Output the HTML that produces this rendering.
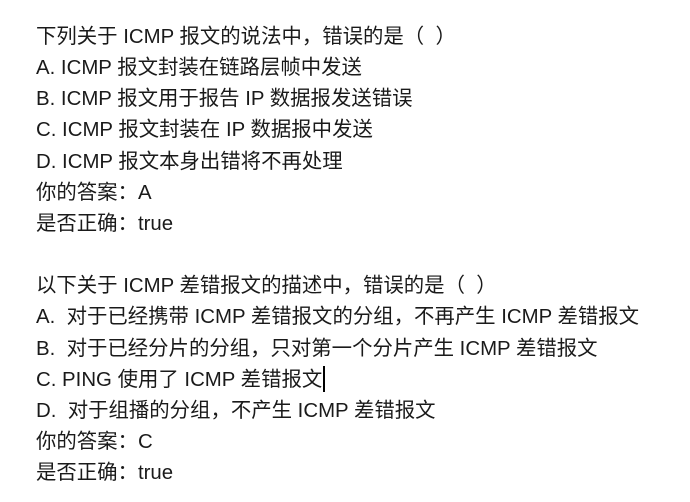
<!DOCTYPE html>
<html><head><meta charset="utf-8"><style>
html,body{margin:0;padding:0;background:#fff;width:690px;height:502px;overflow:hidden}
.c{position:absolute;left:36px;top:22px;font-family:"Liberation Sans","Noto Sans CJK SC",sans-serif;font-size:20.4px;line-height:31.15px;color:#1a1a1a;white-space:pre}
.cur{display:inline-block;width:2px;height:26px;background:#000;vertical-align:-6px;margin-left:1px}
</style></head><body><div class="c">下列关于 ICMP 报文的说法中，错误的是（  ）
A. ICMP 报文封装在链路层帧中发送
B. ICMP 报文用于报告 IP 数据报发送错误
C. ICMP 报文封装在 IP 数据报中发送
D. ICMP 报文本身出错将不再处理
你的答案：A
是否正确：true

以下关于 ICMP 差错报文的描述中，错误的是（  ）
A.  对于已经携带 ICMP 差错报文的分组，不再产生 ICMP 差错报文
B.  对于已经分片的分组，只对第一个分片产生 ICMP 差错报文
C. PING 使用了 ICMP 差错报文<span class="cur"></span>
D.  对于组播的分组，不产生 ICMP 差错报文
你的答案：C
是否正确：true</div></body></html>
